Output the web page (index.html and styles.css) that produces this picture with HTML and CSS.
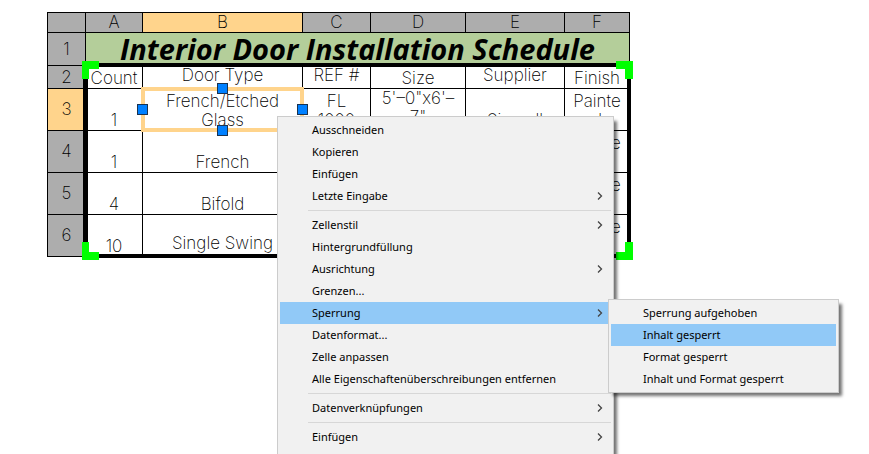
FILE: index.html
```
<!DOCTYPE html>
<html lang="de">
<head>
  <meta charset="UTF-8" />
  <meta name="viewport" content="width=device-width, initial-scale=1.0" />
  <title>Interior Door Installation Schedule</title>
  <link rel="stylesheet" href="styles.css">
</head>
<body>
  <main class="sheet">
    <table class="schedule">
      <colgroup>
        <col class="col-num"><col class="col-a"><col class="col-b"><col class="col-c"><col class="col-d"><col class="col-e"><col class="col-f">
      </colgroup>
      <tr class="letters">
        <th></th><th>A</th><th class="active">B</th><th>C</th><th>D</th><th>E</th><th>F</th>
      </tr>
      <tr class="title-row">
        <th>1</th>
        <td class="title" colspan="6">Interior Door Installation Schedule</td>
      </tr>
      <tr class="head-row">
        <th>2</th>
        <td>Count</td><td class="raised">Door Type</td><td class="raised">REF #</td><td>Size</td><td class="raised">Supplier</td><td>Finish</td>
      </tr>
      <tr class="row">
        <th class="active">3</th>
        <td>1</td>
        <td class="selected">French/Etched<br>Glass
          <span class="focus"><i class="grip top"></i><i class="grip right"></i><i class="grip bottom"></i><i class="grip left"></i></span>
        </td>
        <td>FL<br>1000</td><td class="raised">5'–0"x6'–<br>7"</td><td>Simcoll</td><td>Painte<br>d</td>
      </tr>
      <tr class="row">
        <th>4</th>
        <td>1</td><td>French</td><td></td><td></td><td></td><td>Painte<br>d</td>
      </tr>
      <tr class="row">
        <th>5</th>
        <td>4</td><td>Bifold</td><td></td><td></td><td></td><td>Painte<br>d</td>
      </tr>
      <tr class="row">
        <th>6</th>
        <td>10</td><td class="raised">Single Swing</td><td></td><td></td><td></td><td>Painte<br>d</td>
      </tr>
    </table>
    <div class="range">
      <i class="corner tl"></i><i class="corner tr"></i><i class="corner bl"></i><i class="corner br"></i>
    </div>
  </main>

  <svg width="0" height="0" class="defs">
    <symbol id="chevron" viewBox="0 0 6 8"><path d="M1 0.5 L4.5 4 L1 7.5" fill="none" stroke="#444" stroke-width="1.3"/></symbol>
  </svg>

  <ul class="menu context">
    <li><button>Ausschneiden</button></li>
    <li><button>Kopieren</button></li>
    <li><button>Einfügen</button></li>
    <li><button>Letzte Eingabe <svg class="chevron"><use href="#chevron"/></svg></button></li>
    <li class="separator"></li>
    <li><button>Zellenstil <svg class="chevron"><use href="#chevron"/></svg></button></li>
    <li><button>Hintergrundfüllung</button></li>
    <li><button>Ausrichtung <svg class="chevron"><use href="#chevron"/></svg></button></li>
    <li><button>Grenzen...</button></li>
    <li class="open">
      <button class="highlight">Sperrung <svg class="chevron"><use href="#chevron"/></svg></button>
      <ul class="menu submenu">
        <li><button>Sperrung aufgehoben</button></li>
        <li><button class="highlight">Inhalt gesperrt</button></li>
        <li><button>Format gesperrt</button></li>
        <li><button>Inhalt und Format gesperrt</button></li>
      </ul>
    </li>
    <li><button>Datenformat...</button></li>
    <li><button>Zelle anpassen</button></li>
    <li><button>Alle Eigenschaftenüberschreibungen entfernen</button></li>
    <li class="separator"></li>
    <li><button>Datenverknüpfungen <svg class="chevron"><use href="#chevron"/></svg></button></li>
    <li class="separator"></li>
    <li><button>Einfügen <svg class="chevron"><use href="#chevron"/></svg></button></li>
  </ul>
</body>
</html>
```

FILE: styles.css
```
* {
  box-sizing: border-box;
}
body {
  position: relative;
  margin: 0;
  padding: 12px 0 0 47px;
  height: 100vh;
  overflow: hidden;
  background: #fff;
  color: #000;
  font-family: Inter, "Liberation Sans", sans-serif;
}
.defs {
  position: absolute;
}

/* drawing table */
.sheet {
  position: relative;
  width: 70%;
  min-width: 583px;
}
.schedule {
  width: 100%;
  table-layout: fixed;
  border-collapse: collapse;
  font-size: 17px;
  font-weight: 200;
  line-height: 19px;
  text-align: center;
}
.col-num { width: 38px; }
.col-a { width: 57px; }
.col-b { width: 160px; }
.col-c { width: 68px; }
.col-d { width: 95px; }
.col-e { width: 99px; }
.col-f { width: 65px; }
.schedule th,
.schedule td {
  padding: 0;
  border: 1px solid #000;
}
.schedule th {
  background: #adadad;
  font-weight: 200;
  vertical-align: middle;
}
.schedule th.active {
  background: #ffd48c;
}
.schedule td {
  vertical-align: bottom;
}
.schedule td.raised {
  padding-bottom: 3px;
}
.letters { height: 20px; }
.title-row { height: 33px; }
.head-row { height: 23px; }
.row { height: 42px; }
.schedule td.title {
  background: #b4ce9a;
  font-family: "Open Sans", "Liberation Sans", sans-serif;
  font-size: 29px;
  font-style: italic;
  font-weight: 700;
  line-height: 30px;
  vertical-align: middle;
}

/* selected cell */
.selected {
  position: relative;
}
.focus {
  position: absolute;
  inset: -2px;
  border: 4px solid #ffd48c;
}
.grip {
  position: absolute;
  width: 11px;
  height: 11px;
  border: 1px solid #1a3350;
  background: #0080ff;
}
.grip.top { top: -8px; left: calc(50% - 6px); }
.grip.bottom { bottom: -8px; left: calc(50% - 6px); }
.grip.left { left: -8px; top: calc(50% - 6px); }
.grip.right { right: -8px; top: calc(50% - 6px); }

/* selected range */
.range {
  position: absolute;
  inset: 51px -1px -1px 36px;
  border: 4px solid #000;
  border-left-width: 5px;
}
.corner {
  position: absolute;
  width: 17px;
  height: 18px;
  border: 0 solid #0f0;
}
.tl { top: -6px; left: -6px; border-width: 8px 0 0 7px; }
.tr { top: -6px; right: -6px; border-width: 8px 8px 0 0; }
.bl { bottom: -6px; left: -6px; border-width: 0 0 8px 7px; }
.br { bottom: -6px; right: -6px; border-width: 0 8px 8px 0; }

/* menus */
.menu {
  position: absolute;
  margin: 0;
  padding: 2px;
  list-style: none;
  border: 1px solid #ccc;
  background: #f1f1f1;
  box-shadow: 4px 4px 3px -1px rgba(0, 0, 0, 0.55);
}
.context {
  top: 116px;
  left: 277px;
  width: 337px;
  padding-bottom: 24px;
}
.open {
  position: relative;
}
.submenu {
  top: -3px;
  left: calc(100% - 3px);
  width: 231px;
}
.menu button {
  display: flex;
  justify-content: space-between;
  align-items: center;
  width: 100%;
  height: 22px;
  padding: 0 8px 0 32px;
  border: 0;
  background: none;
  color: #000;
  font: 11px/22px "Noto Sans", "Open Sans", sans-serif;
  text-align: left;
  white-space: nowrap;
}
.menu button:hover,
.menu .highlight {
  background: #91c9f7;
}
.separator {
  height: 7px;
  margin-left: 28px;
  padding-top: 3px;
}
.separator::before {
  content: "";
  display: block;
  border-top: 1px solid #d7d7d7;
}
.chevron {
  width: 6px;
  height: 8px;
}
```
